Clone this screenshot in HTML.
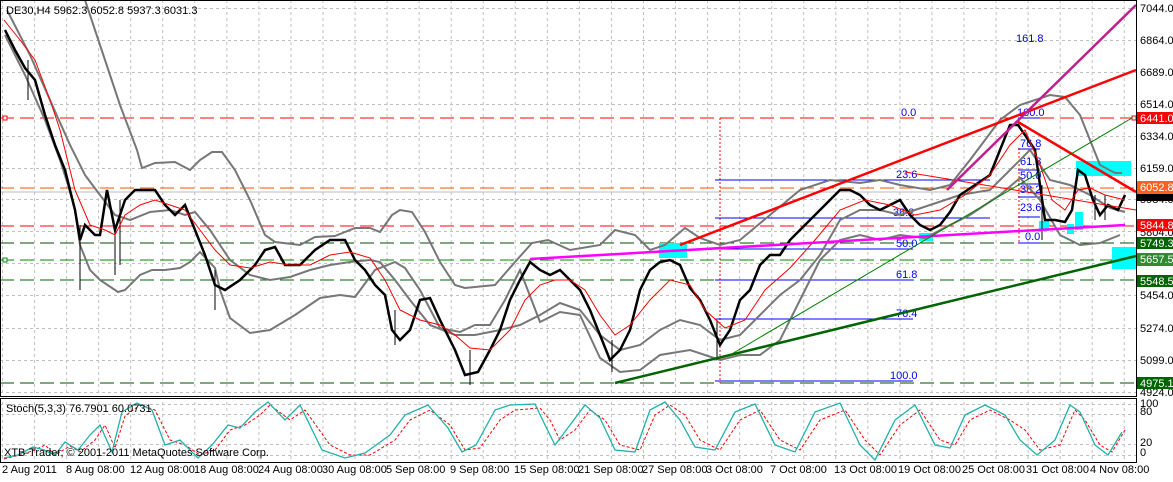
<!DOCTYPE html>
<html><head><meta charset="utf-8"><style>
body{margin:0;background:#fff;width:1173px;height:477px;overflow:hidden;font-family:"Liberation Sans",sans-serif}
svg text{font-family:"Liberation Sans",sans-serif;font-size:11px}
</style></head><body>
<svg width="1173" height="477" viewBox="0 0 1173 477" xmlns="http://www.w3.org/2000/svg">
<defs>
<pattern id="vg" x="2" y="0" width="32.05" height="477" patternUnits="userSpaceOnUse"><line x1="0.5" y1="0" x2="0.5" y2="477" stroke="#c0c0c0" stroke-dasharray="3,3"/></pattern>
</defs>
<rect width="1173" height="477" fill="#fff"/>
<rect x="2" y="1" width="1134" height="395" fill="url(#vg)"/>
<rect x="2" y="399" width="1134" height="63" fill="url(#vg)"/>
<g stroke="#c0c0c0" stroke-dasharray="3,3">
<line x1="0" y1="8.5" x2="1136" y2="8.5"/><line x1="0" y1="40.5" x2="1136" y2="40.5"/><line x1="0" y1="72.5" x2="1136" y2="72.5"/><line x1="0" y1="104.5" x2="1136" y2="104.5"/><line x1="0" y1="136.5" x2="1136" y2="136.5"/><line x1="0" y1="168.5" x2="1136" y2="168.5"/><line x1="0" y1="199.5" x2="1136" y2="199.5"/><line x1="0" y1="231.5" x2="1136" y2="231.5"/><line x1="0" y1="263.5" x2="1136" y2="263.5"/><line x1="0" y1="295.5" x2="1136" y2="295.5"/><line x1="0" y1="328.5" x2="1136" y2="328.5"/><line x1="0" y1="360.5" x2="1136" y2="360.5"/><line x1="0" y1="392.5" x2="1136" y2="392.5"/>
<line x1="0" y1="404.5" x2="1136" y2="404.5"/><line x1="0" y1="414.5" x2="1136" y2="414.5"/><line x1="0" y1="444.5" x2="1136" y2="444.5"/><line x1="0" y1="455.5" x2="1136" y2="455.5"/>
</g>
<!-- horizontal levels -->
<line x1="0" y1="118" x2="1136" y2="118" stroke="#f00" stroke-dasharray="14,6"/>
<line x1="0" y1="188" x2="1136" y2="188" stroke="#ff5000" stroke-dasharray="14,6"/>
<line x1="0" y1="192" x2="1136" y2="192" stroke="#bbb"/>
<line x1="0" y1="226" x2="1136" y2="226" stroke="#f00" stroke-dasharray="14,6"/>
<line x1="0" y1="243" x2="1136" y2="243" stroke="#005000" stroke-dasharray="14,6"/>
<line x1="0" y1="260" x2="1136" y2="260" stroke="#080" stroke-dasharray="14,6"/>
<line x1="0" y1="280" x2="1136" y2="280" stroke="#006400" stroke-dasharray="14,6"/>
<line x1="0" y1="383" x2="1136" y2="383" stroke="#005000" stroke-dasharray="14,6"/>
<rect x="3" y="116" width="4" height="4" fill="#fff" stroke="#f00"/>
<rect x="1132" y="116" width="4" height="4" fill="#fff" stroke="#f00"/>
<rect x="3" y="258" width="4" height="4" fill="#fff" stroke="#080"/>
<!-- cyan boxes -->
<g fill="#00ffff">
<rect x="659" y="243" width="28" height="15"/><rect x="1076" y="161" width="55" height="15"/><rect x="1112" y="247" width="24" height="22"/><rect x="1039" y="221" width="10" height="10"/><rect x="1075" y="212" width="8" height="18"/><rect x="919" y="233" width="14" height="8"/><rect x="1067" y="224" width="7" height="10"/>
</g>
<!-- fib -->
<line x1="720" y1="118" x2="720" y2="383" stroke="#f00" stroke-dasharray="2,2"/>
<g stroke="#00f">
<line x1="715" y1="180" x2="990" y2="180"/><line x1="715" y1="218" x2="990" y2="218"/><line x1="715" y1="249" x2="913" y2="249"/><line x1="715" y1="280" x2="913" y2="280"/><line x1="715" y1="319" x2="913" y2="319"/><line x1="715" y1="381" x2="913" y2="381"/>
<line x1="1018" y1="118" x2="1040" y2="118"/><line x1="1018" y1="149" x2="1040" y2="149"/><line x1="1018" y1="170" x2="1040" y2="170"/><line x1="1018" y1="184" x2="1040" y2="184"/><line x1="1018" y1="197" x2="1040" y2="197"/><line x1="1018" y1="217" x2="1040" y2="217"/><line x1="1018" y1="243" x2="1040" y2="243"/>
</g>
<line x1="1019" y1="148" x2="1019" y2="243" stroke="#f00" stroke-dasharray="2,2"/>
<g fill="#00f" font-size="10">
<text x="1016" y="42">161.8</text><text x="901" y="116">0.0</text><text x="896" y="178">23.6</text><text x="893" y="216">38.2</text><text x="896" y="247">50.0</text><text x="896" y="278">61.8</text><text x="896" y="317">76.4</text><text x="890" y="379">100.0</text>
<text x="1017" y="116">100.0</text><text x="1020" y="147">76.8</text><text x="1020" y="165">61.8</text><text x="1020" y="179">50.0</text><text x="1020" y="193">38.2</text><text x="1020" y="211">23.6</text><text x="1025" y="240">0.0</text>
</g>
<!-- bollinger -->
<g fill="none" stroke="#777" stroke-width="2">
<polyline points="85,0 100,45 120,105 137,150 142,168 155,163 175,162 190,170 200,160 212,152 222,152 235,170 250,200 265,235 275,242 300,245 315,237 335,236 355,228 370,228 380,232 392,215 400,210 412,212 425,232 440,262 455,285 465,288 495,285 515,262 532,243 548,240 570,250 600,245 615,230 635,235 650,250 665,245 685,228 700,238 720,245 740,240 770,215 800,190 830,180 860,183 880,180 900,185 930,190 950,185 970,160 1000,120 1020,105 1050,95 1065,97 1080,115 1090,140 1100,165 1115,173 1122,173"/>
<polyline points="7,10 30,55 50,100 70,145 85,175 100,195 115,215 130,220 150,212 170,210 185,215 195,212 210,230 230,260 250,275 270,280 290,277 310,270 330,265 350,262 370,260 380,262 395,280 410,300 430,325 455,335 475,335 500,330 520,325 540,315 560,303 580,310 600,335 620,350 640,345 660,330 680,320 700,325 720,340 740,335 760,315 780,295 800,280 820,255 840,220 860,210 880,210 900,215 930,205 960,195 990,190 1010,170 1030,150 1050,180 1070,185 1090,195 1110,208 1125,212"/>
<polyline points="5,35 25,75 45,120 60,160 68,185 75,210 80,245 90,270 100,280 118,292 125,290 140,275 152,270 165,270 180,268 190,262 200,252 215,268 220,290 230,318 250,333 270,330 295,315 320,298 340,295 355,297 375,270 395,262 405,268 420,290 440,328 460,332 475,325 490,325 505,300 520,270 540,322 560,312 580,315 600,358 620,372 640,370 660,355 690,350 720,360 740,355 760,355 780,340 800,300 820,260 840,240 860,235 880,240 900,235 925,238 950,225 970,215 1000,195 1020,178 1040,200 1060,235 1080,245 1100,243 1120,235"/>
</g>
<!-- price -->
<polyline fill="none" stroke="#000" stroke-width="2.5" points="5,30 15,50 25,68 35,80 45,115 55,145 65,170 75,210 80,240 85,225 95,235 100,235 107,190 115,230 125,200 135,190 145,190 155,190 165,205 175,215 185,205 195,230 205,255 215,285 225,290 240,280 255,265 265,250 275,247 285,265 300,265 315,250 330,240 345,240 355,260 365,270 375,285 385,295 392,330 400,340 410,330 420,300 430,298 440,320 455,350 465,375 478,372 490,350 500,330 510,300 520,280 530,262 540,270 550,275 560,270 570,280 580,290 590,310 600,335 610,360 620,350 630,330 640,290 650,270 660,262 670,260 680,265 690,288 700,300 710,320 720,345 730,330 740,300 750,290 760,265 770,255 780,255 790,240 800,230 810,220 820,210 830,200 840,190 850,190 860,195 870,205 880,210 890,205 900,200 910,215 920,225 930,230 940,225 950,212 960,195 975,185 990,175 1000,150 1010,125 1018,125 1025,135 1035,150 1040,185 1045,220 1055,220 1065,222 1072,210 1078,170 1085,175 1093,200 1100,215 1108,205 1118,210 1125,195"/>
<g stroke="#000" stroke-width="1">
<line x1="28" y1="60" x2="28" y2="100"/><line x1="80" y1="225" x2="80" y2="290"/><line x1="115" y1="225" x2="115" y2="275"/><line x1="120" y1="200" x2="120" y2="265"/><line x1="215" y1="270" x2="215" y2="310"/><line x1="395" y1="310" x2="395" y2="345"/><line x1="470" y1="350" x2="470" y2="385"/><line x1="612" y1="340" x2="612" y2="372"/><line x1="717" y1="320" x2="717" y2="360"/><line x1="1042" y1="185" x2="1042" y2="240"/><line x1="1095" y1="195" x2="1095" y2="220"/><line x1="1105" y1="195" x2="1105" y2="220"/>
</g>
<!-- MA red -->
<polyline fill="none" stroke="#f00" stroke-width="1" points="4,20 20,40 35,60 50,100 60,130 75,190 90,225 105,230 115,235 125,215 140,205 155,200 170,205 185,210 200,230 215,250 230,265 250,268 270,262 290,265 310,265 330,255 350,252 370,258 385,280 400,310 420,320 440,325 455,335 470,348 490,350 510,330 525,300 540,285 555,280 570,280 585,290 600,315 615,335 630,325 650,300 670,280 690,285 705,310 725,328 745,320 765,290 790,268 815,240 840,210 865,200 890,205 915,215 940,210 965,195 990,175 1010,145 1025,130 1040,165 1052,200 1065,210 1078,190 1090,188 1105,195 1125,200"/>
<!-- trendlines -->
<line x1="680" y1="245" x2="1136" y2="70" stroke="#f00" stroke-width="2.5"/>
<line x1="1018" y1="122" x2="1136" y2="192" stroke="#f00" stroke-width="2.5"/>
<line x1="905" y1="172" x2="1136" y2="210" stroke="#f00" stroke-width="1"/>
<line x1="530" y1="259" x2="1125" y2="225" stroke="#ff00ff" stroke-width="2.5"/>
<line x1="947" y1="190" x2="1136" y2="5" stroke="#c0208f" stroke-width="2.5"/>
<line x1="615" y1="383" x2="1136" y2="256" stroke="#006400" stroke-width="2.5"/>
<line x1="730" y1="355" x2="1132" y2="118" stroke="#008000" stroke-width="1"/>
<!-- frame -->
<rect x="0.5" y="0.5" width="1136" height="396" fill="none" stroke="#000"/>
<rect x="0.5" y="398.5" width="1136" height="64" fill="none" stroke="#000"/>
<text x="6" y="14" font-size="10">DE30,H4  5962.3 6052.8 5937.3 6031.3</text>
<!-- stochastics -->
<polyline fill="none" stroke="#f00" stroke-dasharray="3,2" points="4,459 20,455 35,450 45,445 55,455 70,446 80,452 95,440 105,425 115,448 125,416 140,405 155,410 170,440 185,445 200,455 215,450 230,430 245,425 260,415 270,405 290,420 305,410 330,445 350,455 370,455 395,440 410,420 430,410 450,425 465,450 480,448 500,420 515,410 540,408 550,420 560,440 575,430 590,410 605,420 620,445 640,450 655,415 670,405 685,415 700,440 720,450 740,420 760,410 780,440 800,450 820,420 845,410 865,440 880,455 900,425 920,410 940,440 955,445 970,420 990,410 1010,420 1025,430 1040,450 1060,445 1075,410 1085,420 1100,445 1112,452 1125,430"/>
<polyline fill="none" stroke="#20b2aa" stroke-width="1.3" points="4,458 18,455 33,447 44,450 55,455 65,442 78,450 90,435 100,425 112,452 122,412 137,403 152,410 165,445 180,440 198,458 212,445 228,425 240,428 255,412 268,402 285,420 300,405 322,450 345,458 365,453 390,435 405,415 428,405 448,428 462,452 476,445 495,410 510,405 535,404 545,425 555,445 570,425 585,405 600,418 615,450 635,452 650,410 665,402 680,420 695,447 715,450 735,412 755,404 775,445 795,452 815,412 840,403 860,445 875,460 895,420 915,405 935,445 950,448 965,415 985,405 1005,415 1020,440 1037,455 1055,440 1070,405 1080,412 1095,445 1108,455 1122,432"/>
<text x="6" y="412" font-size="10">Stoch(5,3,3) 76.7901 60.0731</text>
<text x="4" y="456" font-size="10">XTB-Trader, © 2001-2011 MetaQuotes Software Corp.</text>
<!-- right axis -->
<g font-size="10" fill="#000">
<text x="1140" y="12">7044.0</text><text x="1140" y="44">6864.0</text><text x="1140" y="76">6689.0</text><text x="1140" y="108">6514.0</text><text x="1140" y="140">6334.0</text><text x="1140" y="172">6159.0</text><text x="1140" y="203">5984.0</text><text x="1140" y="236">5804.0</text><text x="1140" y="299">5454.0</text><text x="1140" y="332">5274.0</text><text x="1140" y="364">5099.0</text><text x="1140" y="396">4924.0</text>
<text x="1140" y="407">100</text><text x="1140" y="415">80</text><text x="1140" y="446">20</text><text x="1140" y="456">0</text>
</g>
<rect x="1137" y="193" width="36" height="8" fill="#000"/>
<rect x="1137" y="112" width="36" height="12" fill="#f00"/><text x="1140" y="122" font-size="10" fill="#fff">6441.0</text>
<rect x="1137" y="181" width="36" height="13" fill="#ff6020"/><text x="1140" y="191" font-size="10" fill="#fff">6052.8</text>
<rect x="1137" y="219" width="36" height="12" fill="#f00"/><text x="1140" y="229" font-size="10" fill="#fff">5844.8</text>
<rect x="1137" y="237" width="36" height="12" fill="#006400"/><text x="1140" y="247" font-size="10" fill="#fff">5749.3</text>
<rect x="1137" y="253" width="36" height="13" fill="#2e8b2e"/><text x="1140" y="263" font-size="10" fill="#fff">5657.5</text>
<rect x="1137" y="275" width="36" height="12" fill="#006400"/><text x="1140" y="285" font-size="10" fill="#fff">5548.5</text>
<rect x="1137" y="377" width="36" height="12" fill="#006400"/><text x="1140" y="387" font-size="10" fill="#fff">4975.1</text>
<g font-size="10">
<text x="2" y="473">2 Aug 2011</text><text x="66" y="473">8 Aug 08:00</text><text x="130" y="473">12 Aug 08:00</text><text x="194" y="473">18 Aug 08:00</text><text x="258" y="473">24 Aug 08:00</text><text x="322" y="473">30 Aug 08:00</text><text x="386" y="473">5 Sep 08:00</text><text x="450" y="473">9 Sep 08:00</text><text x="514" y="473">15 Sep 08:00</text><text x="578" y="473">21 Sep 08:00</text><text x="642" y="473">27 Sep 08:00</text><text x="706" y="473">3 Oct 08:00</text><text x="770" y="473">7 Oct 08:00</text><text x="834" y="473">13 Oct 08:00</text><text x="898" y="473">19 Oct 08:00</text><text x="962" y="473">25 Oct 08:00</text><text x="1026" y="473">31 Oct 08:00</text><text x="1090" y="473">4 Nov 08:00</text>
</g>
</svg>
</body></html>
